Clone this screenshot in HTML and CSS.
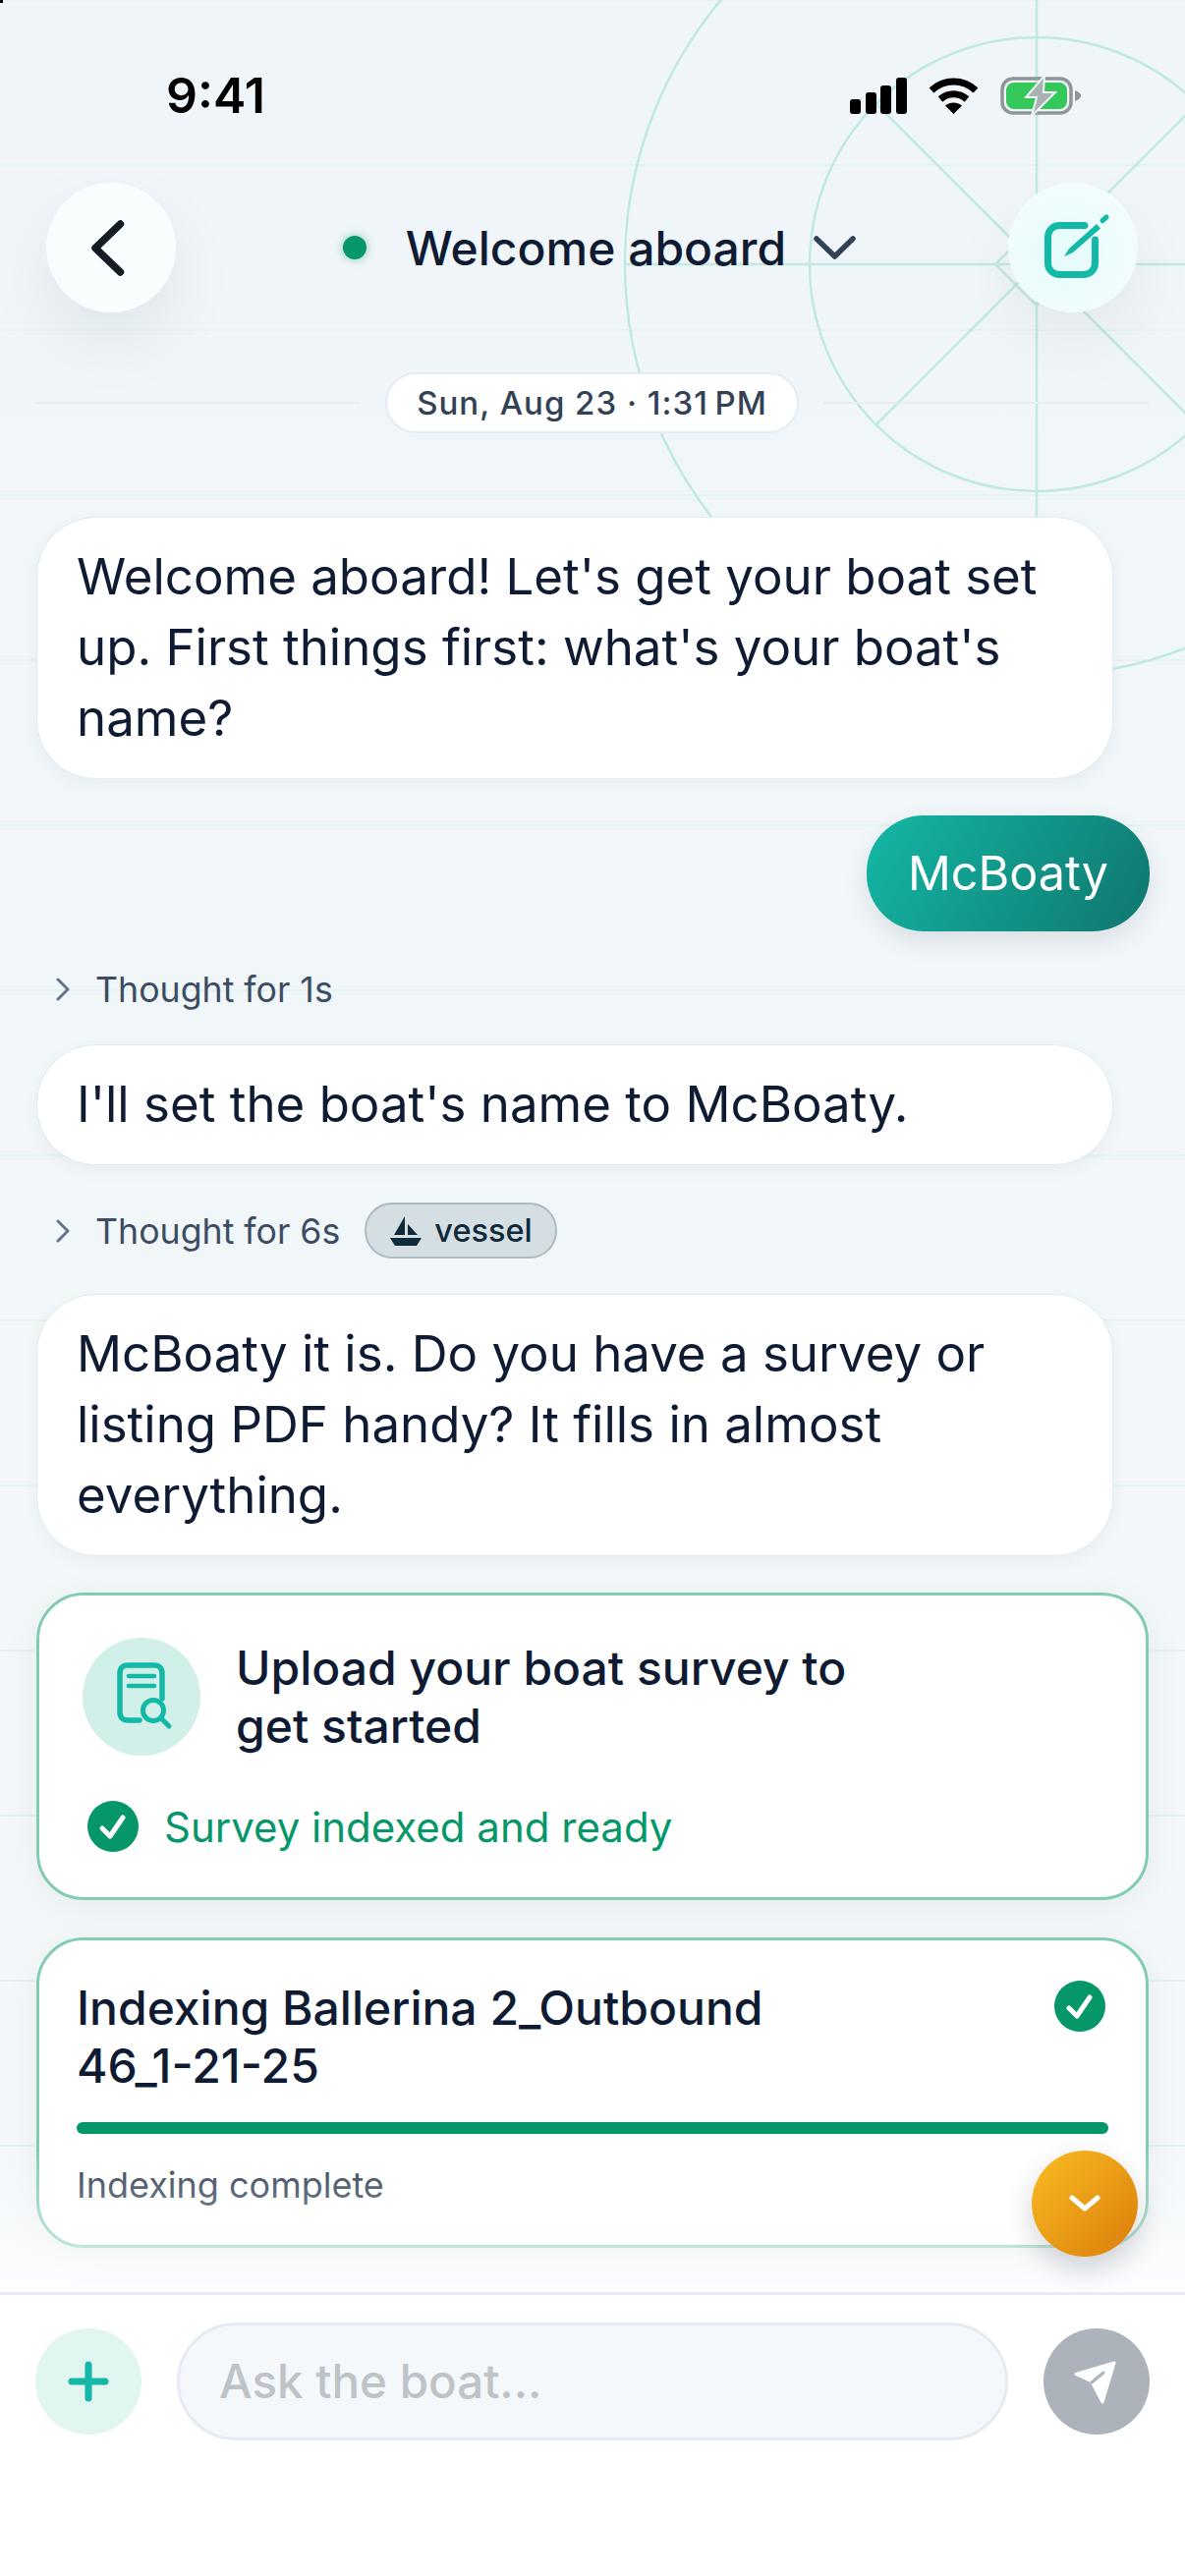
FILE: index.html
```html
<!DOCTYPE html>
<html lang="en">
<head>
    <meta charset="UTF-8">
    <meta name="viewport" content="width=device-width, initial-scale=1.0">
    <title>Ask the boat</title>
    <link rel="stylesheet" href="styles.css">
</head>
<body>
    <div class="screen">
        <span class="corner-mark"></span>

        <svg class="chart-lines" width="1206" height="1000" viewBox="0 0 1206 1000" fill="none">
            <circle cx="1055" cy="269" r="419"/>
            <circle cx="1055" cy="269" r="231"/>
            <path d="M1055 0V688M636 269H1206"/>
            <path d="M892 106L1218 432M892 432L1218 106"/>
            <path d="M1013 269L1055 227L1097 269L1055 311Z"/>
        </svg>

        <div class="status-bar">
            <span class="clock">9:41</span>
            <div class="status-icons">
                <svg width="58" height="37" viewBox="0 0 58 37" fill="#000">
                    <rect x="0" y="22" width="11" height="15" rx="3"/>
                    <rect x="16" y="15" width="11" height="22" rx="3"/>
                    <rect x="31" y="8" width="11" height="29" rx="3"/>
                    <rect x="47" y="0" width="11" height="37" rx="3"/>
                </svg>
                <svg width="51" height="37" viewBox="0 0 51 37" fill="none" stroke="#000" stroke-width="7">
                    <path d="M3 13C16 1 35 1 48 13"/>
                    <path d="M12 22C20 15 31 15 39 22"/>
                    <path d="M25.5 37L17 28.500C22 24.500 29 24.500 34 28.500Z" fill="#000" stroke="none"/>
                </svg>
                <svg width="82" height="39" viewBox="0 0 82 39" fill="none">
                    <rect x="2" y="2" width="70" height="35" rx="11" stroke="#8f9699" stroke-width="3.500"/>
                    <rect x="6" y="6" width="62" height="27" rx="8" fill="#34c759"/>
                    <path d="M76 14C79 15 82 17 82 19.500C82 22 79 24 76 25Z" fill="#8f9699"/>
                    <path d="M45 -1L26 21H37L32 40L56 16H44Z" fill="#a9b1b3" stroke="#eff5f8" stroke-width="2"/>
                </svg>
            </div>
        </div>

        <header class="top-bar">
            <button class="round-btn back-btn">
                <svg width="132" height="132" viewBox="0 0 132 132" fill="none" stroke="#141d24" stroke-width="7.500" stroke-linecap="round" stroke-linejoin="round">
                    <path d="M75.500 42L50 66.500L75.500 91"/>
                </svg>
            </button>
            <div class="chat-title">
                <span class="live-dot"></span>
                <span class="chat-name">Welcome aboard</span>
                <svg width="43" height="25" viewBox="0 0 43 25" fill="none" stroke="#334155" stroke-width="5.500" stroke-linecap="round" stroke-linejoin="round">
                    <path d="M3 3L21.500 21L40 3"/>
                </svg>
            </div>
            <button class="round-btn compose-btn">
                <svg width="132" height="132" viewBox="0 0 132 132" fill="none" stroke="#14b8a6" stroke-width="7" stroke-linecap="round">
                    <path d="M78 43.500H52.500C45.500 43.500 40.500 48.500 40.500 55.500V81.500C40.500 88.500 45.500 93.500 52.500 93.500H76.500C83.500 93.500 88.500 88.500 88.500 81.500V58"/>
                    <path d="M57 75L62 67L90 42L94 46.500L66 71Z" fill="#14b8a6" stroke="none"/>
                    <path d="M96 38.500L100 35" stroke-width="5"/>
                </svg>
            </button>
        </header>

        <div class="date-row">
            <span class="date-line"></span>
            <span class="date-pill">Sun, Aug 23 · 1:31&#8239;PM</span>
            <span class="date-line"></span>
        </div>

        <main class="chat">
            <p class="bubble">Welcome aboard! Let's get your boat set up. First things first: what's your boat's name?</p>
            <p class="bubble-user">McBoaty</p>

            <div class="thought">
                <svg class="thought-arrow" width="14" height="24" viewBox="0 0 14 24" fill="none" stroke="#64748b" stroke-width="3" stroke-linecap="round" stroke-linejoin="round">
                    <path d="M2 2L12 12L2 22"/>
                </svg>
                <span>Thought for 1s</span>
            </div>
            <p class="bubble">I'll set the boat's name to McBoaty.</p>

            <div class="thought thought-tool">
                <svg class="thought-arrow" width="14" height="24" viewBox="0 0 14 24" fill="none" stroke="#64748b" stroke-width="3" stroke-linecap="round" stroke-linejoin="round">
                    <path d="M2 2L12 12L2 22"/>
                </svg>
                <span>Thought for 6s</span>
                <span class="tool-pill">
                    <svg width="32" height="30" viewBox="0 0 32 30" fill="#0f2a3a">
                        <path d="M15 0V19H4Z"/>
                        <path d="M18 8L28 19H18Z"/>
                        <path d="M0 22H32L27 30H5Z"/>
                    </svg>
                    vessel
                </span>
            </div>
            <p class="bubble">McBoaty it is. Do you have a survey or listing PDF handy? It fills in almost everything.</p>

            <section class="card upload-card">
                <div class="upload-head">
                    <span class="doc-icon">
                        <svg width="120" height="120" viewBox="0 0 120 120" fill="none" stroke="#14b8a6" stroke-width="5.500" stroke-linecap="round">
                            <path d="M58 84H46C41 84 38 81 38 76V36C38 31 41 28 46 28H73C78 28 81 31 81 36V62"/>
                            <path d="M47 39H73M47 49H73" stroke-width="4.500"/>
                            <circle cx="72" cy="74" r="10.500" stroke-width="5"/>
                            <path d="M80 82L88 90" stroke-width="5"/>
                        </svg>
                    </span>
                    <h2 class="card-title">Upload your boat survey to get started</h2>
                </div>
                <div class="upload-status">
                    <svg class="check" width="52" height="52" viewBox="0 0 52 52" fill="none">
                        <circle cx="26" cy="26" r="26" fill="#059669"/>
                        <path d="M15 28L23 36L36 17" stroke="#fff" stroke-width="5" stroke-linecap="round" stroke-linejoin="round"/>
                    </svg>
                    <span>Survey indexed and ready</span>
                </div>
            </section>

            <section class="card index-card">
                <div class="index-head">
                    <h2 class="card-title">Indexing Ballerina 2_Outbound 46_1-21-25</h2>
                    <svg class="check" width="52" height="52" viewBox="0 0 52 52" fill="none">
                        <circle cx="26" cy="26" r="26" fill="#059669"/>
                        <path d="M15 28L23 36L36 17" stroke="#fff" stroke-width="5" stroke-linecap="round" stroke-linejoin="round"/>
                    </svg>
                </div>
                <div class="progress"></div>
                <div class="index-note">Indexing complete</div>
            </section>
        </main>

        <div class="bottom-fade"></div>

        <button class="round-btn scroll-btn">
            <svg width="32" height="18" viewBox="0 0 32 18" fill="none" stroke="#fff" stroke-width="5" stroke-linecap="round" stroke-linejoin="round">
                <path d="M3 3L16 14L29 3"/>
            </svg>
        </button>

        <footer class="composer">
            <button class="round-btn add-btn">
                <svg width="42" height="42" viewBox="0 0 42 42" fill="none" stroke="#14b8a6" stroke-width="7" stroke-linecap="round">
                    <path d="M21 4V38M4 21H38"/>
                </svg>
            </button>
            <div class="ask-input">Ask the boat...</div>
            <button class="round-btn send-btn">
                <svg width="108" height="108" viewBox="0 0 108 108">
                    <path d="M72 35L33 46.500L49 54L60 75L72 35Z" fill="#fff" stroke="#fff" stroke-width="3" stroke-linejoin="round"/>
                    <path d="M49 55L61 45" fill="none" stroke="#adb3bb" stroke-width="3" stroke-linecap="round"/>
                </svg>
            </button>
        </footer>
    </div>
</body>
</html>
```

FILE: styles.css
```css
* {
    box-sizing: border-box;
}
html, body {
    margin: 0;
    padding: 0;
}
body {
    font-family: 'Inter', 'Liberation Sans', sans-serif;
    color: #0f1b33;
}
.screen {
    position: relative;
    width: 1206px;
    height: 2622px;
    overflow: hidden;
    display: flex;
    flex-direction: column;
    background-color: #f2f7fa;
    background-image:
        repeating-linear-gradient(to bottom, #e2f3f1 0, #e2f3f1 1px, transparent 1px, transparent 167px, #e2f3f1 167px, #e2f3f1 168px),
        linear-gradient(to bottom, #eff5f8 0%, #f4f8fb 100%);
}
.corner-mark {
    position: absolute;
    top: 0;
    left: 0;
    width: 3px;
    height: 3px;
    background: #000;
}
.chart-lines {
    position: absolute;
    top: 0;
    left: 0;
}
.chart-lines circle,
.chart-lines path {
    stroke: #bfe9e2;
    stroke-width: 2.5;
}
.status-bar {
    position: relative;
    height: 186px;
    padding: 67px 106px 0 169px;
    display: flex;
    justify-content: space-between;
    align-items: flex-start;
}
.clock {
    font-size: 50px;
    line-height: 60px;
    font-weight: 600;
    color: #000;
}
.status-icons {
    display: flex;
    align-items: center;
    gap: 22px;
    padding-top: 11px;
}
.top-bar {
    position: relative;
    height: 132px;
    padding: 0 48px 0 47px;
    display: flex;
    justify-content: space-between;
    align-items: center;
}
.round-btn {
    flex: none;
    border: none;
    padding: 0;
    border-radius: 50%;
    display: flex;
    align-items: center;
    justify-content: center;
}
.back-btn,
.compose-btn {
    width: 132px;
    height: 132px;
}
.back-btn {
    background: #f8fdfe;
    box-shadow: 0 30px 70px rgba(15, 23, 42, 0.07);
}
.compose-btn {
    background: radial-gradient(circle at 45% 55%, #e4fbfb 0%, #f4fcfd 75%);
    box-shadow: 0 30px 70px rgba(15, 23, 42, 0.06);
}
.chat-title {
    display: flex;
    align-items: center;
    padding-left: 15px;
}
.live-dot {
    width: 24px;
    height: 24px;
    border-radius: 50%;
    background: #059669;
    box-shadow: 0 0 10px rgba(5, 150, 105, 0.45);
    margin-right: 40px;
}
.chat-name {
    font-size: 48px;
    font-weight: 500;
    line-height: 60px;
    padding-top: 2px;
    margin-right: 28px;
}
.date-row {
    position: relative;
    height: 62px;
    margin-top: 61px;
    padding: 0 37px 0 36px;
    display: flex;
    align-items: center;
    gap: 25px;
}
.date-line {
    flex: 1;
    height: 2px;
    background: #e8edf3;
}
.date-pill {
    flex: none;
    width: 421px;
    height: 62px;
    text-align: center;
    line-height: 58px;
    font-size: 33px;
    letter-spacing: 1px;
    color: #334155;
    font-weight: 500;
    background: #fff;
    border: 2px solid #e6ecf3;
    border-radius: 31px;
}
.chat {
    position: relative;
    flex: 1;
    margin-top: 87px;
    padding: 0 37px;
    display: flex;
    flex-direction: column;
    align-items: flex-start;
}
.bubble {
    width: 1096px;
    margin: -2px 0;
    padding: 24px 40px 25px 40px;
    font-size: 51px;
    line-height: 72px;
    background: #fff;
    border: 1.5px solid #e4eaf1;
    border-radius: 60px;
    box-shadow: 0 6px 18px rgba(15, 23, 42, 0.04);
}
.bubble-user {
    align-self: flex-end;
    height: 118px;
    margin: 39px -1px 30px 0;
    padding: 0 42px;
    line-height: 118px;
    font-size: 48.500px;
    color: #fff;
    background: linear-gradient(120deg, #14b8a6 0%, #0f766e 100%);
    border-radius: 58px;
    box-shadow: 0 10px 26px rgba(15, 23, 42, 0.1);
}
.thought {
    height: 57px;
    margin-bottom: 30px;
    padding-left: 20px;
    display: flex;
    align-items: center;
    font-size: 35.700px;
    color: #3c4d63;
}
.thought-arrow {
    margin-right: 26px;
}
.thought-tool {
    margin-top: 40px;
    margin-bottom: 38px;
}
.tool-pill {
    height: 57px;
    margin-left: 25px;
    padding: 0 23px 0 24px;
    display: flex;
    align-items: center;
    gap: 13px;
    font-size: 32.500px;
    font-weight: 500;
    color: #0f2a3a;
    background: #d5dee2;
    border: 2px solid #aebbc2;
    border-radius: 28px;
}
.card {
    width: 1132px;
    background: #fff;
    border: 3px solid #82cdb2;
    border-radius: 48px;
    box-shadow: 0 8px 40px rgba(15, 23, 42, 0.05);
}
.upload-card {
    height: 313px;
    margin-top: 39px;
    padding: 43px 44px 0 44px;
}
.upload-head {
    display: flex;
    align-items: center;
    gap: 36px;
}
.doc-icon {
    flex: none;
    width: 120px;
    height: 120px;
    border-radius: 50%;
    background: #d1f0ea;
}
.card-title {
    margin: 0;
    font-size: 48px;
    line-height: 59px;
    font-weight: 500;
    width: 660px;
}
.upload-status {
    margin-top: 46px;
    padding-left: 5px;
    display: flex;
    align-items: center;
    gap: 26px;
    font-size: 42px;
    color: #059669;
}
.check {
    flex: none;
}
.index-card {
    height: 316px;
    margin-top: 38px;
    padding: 39px 38px 0 38px;
}
.index-head {
    display: flex;
    justify-content: space-between;
    align-items: flex-start;
    padding-right: 3px;
}
.index-card .card-title {
    width: 800px;
}
.index-head .check {
    margin-top: 2px;
}
.progress {
    height: 12px;
    margin-top: 28px;
    border-radius: 6px;
    background: #059669;
}
.index-note {
    margin-top: 30px;
    font-size: 36px;
    line-height: 44px;
    color: #2f3f55;
}
.bottom-fade {
    position: absolute;
    left: 0;
    right: 0;
    top: 2185px;
    height: 148px;
    background: linear-gradient(to bottom, rgba(255, 255, 255, 0) 0%, rgba(255, 255, 255, 0.7) 100%);
}
.scroll-btn {
    position: absolute;
    left: 1050px;
    top: 2189px;
    width: 108px;
    height: 108px;
    background: linear-gradient(135deg, #f9bd22 0%, #db7c0b 100%);
    box-shadow: 0 12px 30px rgba(15, 23, 42, 0.18);
}
.composer {
    position: relative;
    height: 289px;
    padding: 28px 36px 0 36px;
    display: flex;
    align-items: flex-start;
    background: #fff;
    border-top: 3px solid #e6ebf3;
}
.add-btn {
    width: 108px;
    height: 108px;
    margin-top: 6px;
    background: #e1f5f1;
}
.ask-input {
    width: 846px;
    height: 120px;
    margin: 0 36px;
    padding-left: 40px;
    line-height: 114px;
    font-size: 47.500px;
    font-weight: 500;
    color: #bfc3c7;
    background: #f4f8fb;
    border: 3px solid #e6ebf3;
    border-radius: 60px;
}
.send-btn {
    width: 108px;
    height: 108px;
    margin-top: 6px;
    background: #adb3bb;
}
```
